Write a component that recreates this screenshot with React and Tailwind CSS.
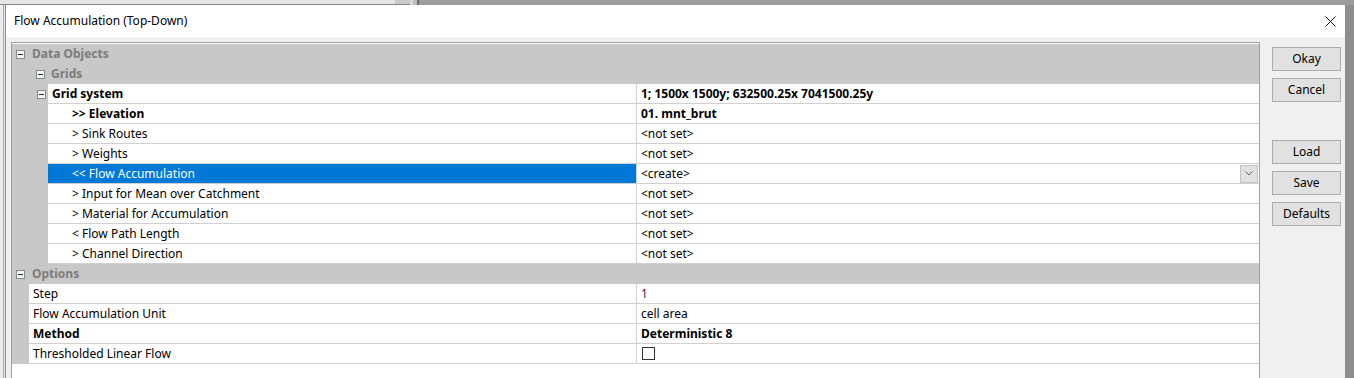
const dataRows = [
  { label: ">> Elevation", value: "01. mnt_brut", bold: true },
  { label: "> Sink Routes", value: "<not set>" },
  { label: "> Weights", value: "<not set>" },
  { label: "<< Flow Accumulation", value: "<create>", selected: true },
  { label: "> Input for Mean over Catchment", value: "<not set>" },
  { label: "> Material for Accumulation", value: "<not set>" },
  { label: "< Flow Path Length", value: "<not set>" },
  { label: "> Channel Direction", value: "<not set>" },
];

const optionRows = [
  { label: "Step", value: "1", num: true },
  { label: "Flow Accumulation Unit", value: "cell area" },
  { label: "Method", value: "Deterministic 8", bold: true },
  { label: "Thresholded Linear Flow", check: true },
];

const Minus = () => (
  <svg width="9" height="9" viewBox="0 0 9 9" className="shrink-0">
    <rect x="0.5" y="0.5" width="8" height="8" fill="#f4f4f4" stroke="#8a8a8a" />
    <line x1="2" y1="4.5" x2="7" y2="4.5" stroke="#1f2a44" />
  </svg>
);

const Category = ({ indent, text }) => (
  <div className="flex h-[20px] items-center bg-[#c8c8c8]">
    <div className={`flex items-center ${indent ? "pl-[24px] w-[39px]" : "pl-[4px] w-[20px]"}`}>
      <Minus />
    </div>
    <span className="font-bold text-[#7c7c7c]">{text}</span>
  </div>
);

const Row = ({ gutter, label, value, bold, selected, num, check, labelPad = "pl-[4px]", icon }) => (
  <div className="flex h-[20px]">
    <div className={`${gutter} shrink-0 bg-[#c8c8c8] flex items-center`}>
      {icon && <div className="pl-[25px] flex items-center"><Minus /></div>}
    </div>
    <div className="flex flex-1 border-b border-[#d0d0d0]">
      <div
        className={`flex items-center ${labelPad} border-r border-[#d0d0d0] ${
          gutter === "w-[36px]" ? "w-[589px]" : "w-[608px]"
        } ${selected ? "bg-[#0078d7] text-white" : ""} ${bold ? "font-bold" : ""}`}
      >
        {label}
      </div>
      <div className={`flex flex-1 items-center pl-[4px] ${bold ? "font-bold" : ""} ${num ? "text-[#4a1a48]" : ""}`}>
        {check ? (
          <div className="w-[13px] h-[13px] border border-[#333] bg-white ml-px" />
        ) : (
          <span className="flex-1">{value}</span>
        )}
        {selected && (
          <div className="w-[18px] h-[18px] mr-px bg-[#e1e1e1] border border-[#c4c4c4] flex items-center justify-center">
            <svg width="8" height="5" viewBox="0 0 8 5">
              <path d="M0.5 0.5 L4 4 L7.5 0.5" fill="none" stroke="#666" />
            </svg>
          </div>
        )}
      </div>
    </div>
  </div>
);

const Btn = ({ children, className = "" }) => (
  <button className={`w-[69px] h-[24px] bg-[#e1e1e1] border border-[#adadad] text-[12px] text-black ${className}`}>
    {children}
  </button>
);

export default function App() {
  return (
    <div className="w-[1354px] h-[378px] overflow-hidden bg-[#8e8e8e] font-['Noto_Sans',sans-serif] text-[12px] text-black flex flex-col">
      <div className="h-[5px] flex shrink-0">
        <div className="w-[395px] bg-[#e6e6e6] border-b border-[#8a8a8a]" />
        <div className="w-[15px] bg-[#c9c9c9] border-b border-[#8a8a8a]" />
        <div className="w-[3px] bg-[#d8d8d8]" />
        <div className="w-[4px] bg-[#bdbdbd]" />
        <div className="w-[2px] bg-[#6e6e6e]" />
        <div className="flex-1 bg-[#9c9c9c]" />
      </div>
      <div className="flex flex-1 min-h-0">
        <div className="w-[5px] shrink-0 bg-[#ececec] flex">
          <div className="w-[3px]" />
          <div className="w-px bg-[#a8a8a8]" />
        </div>
        <div className="w-[1341px] shrink-0 border-l border-r border-[#8a8a8a] bg-[#f0f0f0] flex flex-col">
          <div className="h-[32px] bg-white flex items-center justify-between pl-[8px] pr-[9px] shrink-0">
            <span>Flow Accumulation (Top-Down)</span>
            <svg width="11" height="11" viewBox="0 0 11 11">
              <path d="M0.5 0.5 L10.5 10.5 M10.5 0.5 L0.5 10.5" stroke="#111" strokeWidth="1" />
            </svg>
          </div>
          <div className="flex pl-[5px] pt-[5px] flex-1 min-h-0">
            <div className="w-[1249px] h-[400px] shrink-0 border border-[#a0a0a0] bg-white pt-px">
              <Category text="Data Objects" />
              <Category indent text="Grids" />
              <Row gutter="w-[36px]" icon label="Grid system" value="1; 1500x 1500y; 632500.25x 7041500.25y" bold />
              {dataRows.map((r) => (
                <Row key={r.label} gutter="w-[36px]" labelPad="pl-[24px]" {...r} />
              ))}
              <Category text="Options" />
              {optionRows.map((r) => (
                <Row key={r.label} gutter="w-[17px]" {...r} />
              ))}
            </div>
            <div className="flex flex-col pl-[12px] pt-[5px]">
              <Btn>Okay</Btn>
              <Btn className="mt-[7px]">Cancel</Btn>
              <Btn className="mt-[38px]">Load</Btn>
              <Btn className="mt-[7px]">Save</Btn>
              <Btn className="mt-[7px]">Defaults</Btn>
            </div>
          </div>
        </div>
        <div className="flex-1 bg-[#8e8e8e]" />
      </div>
    </div>
  );
}
